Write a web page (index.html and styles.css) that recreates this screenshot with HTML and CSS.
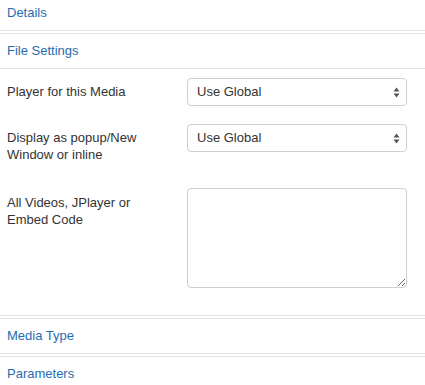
FILE: index.html
```html
<!DOCTYPE html>
<html>
<head>
<meta charset="utf-8">
<link rel="stylesheet" href="styles.css">
</head>
<body>
<div class="accordion">
  <div class="group">
    <a class="toggle" href="#">Details</a>
  </div>
  <div class="group">
    <a class="toggle" href="#">File Settings</a>
    <div class="inner">
      <div class="control-group">
        <label class="control-label">Player for this Media</label>
        <div class="controls">
          <div class="select"><span>Use Global</span>
            <svg class="arrows" width="7" height="11" viewBox="0 0 7 11"><path d="M3.5 0.5 L6.5 4.5 L0.5 4.5 Z M3.5 10.5 L6.5 6.5 L0.5 6.5 Z" fill="#555"/></svg>
          </div>
        </div>
      </div>
      <div class="control-group">
        <label class="control-label">Display as popup/New Window or inline</label>
        <div class="controls">
          <div class="select"><span>Use Global</span>
            <svg class="arrows" width="7" height="11" viewBox="0 0 7 11"><path d="M3.5 0.5 L6.5 4.5 L0.5 4.5 Z M3.5 10.5 L6.5 6.5 L0.5 6.5 Z" fill="#555"/></svg>
          </div>
        </div>
      </div>
      <div class="control-group last">
        <label class="control-label tall">All Videos, JPlayer or Embed Code</label>
        <div class="controls">
          <textarea class="textarea"></textarea>
        </div>
      </div>
    </div>
  </div>
  <div class="group">
    <a class="toggle" href="#">Media Type</a>
  </div>
  <div class="group">
    <a class="toggle" href="#">Parameters</a>
  </div>
</div>
</body>
</html>
```

FILE: styles.css
```css
html, body {
  margin: 0;
  padding: 0;
  background: #fff;
}
body {
  width: 425px;
  height: 385px;
  overflow: hidden;
  font-family: "Helvetica Neue", "Liberation Sans", Arial, sans-serif;
  font-size: 13px;
  line-height: 18px;
  color: #333;
}
.accordion {
  margin-top: -5px;
}
.group {
  border-top: 1px solid #e3e3e3;
  border-bottom: 1px solid #e3e3e3;
  margin-bottom: 2px;
}
.toggle {
  display: block;
  padding: 8px 7px;
  color: #1f6db0;
  text-decoration: none;
}
.inner {
  border-top: 1px solid #e3e3e3;
  padding: 9px 0 9px 7px;
}
.control-group {
  display: flex;
  align-items: flex-start;
  margin-bottom: 18px;
}
.control-group.last {
  margin-top: 25px;
}
.control-label {
  width: 165px;
  margin-right: 15px;
  padding-top: 5px;
  line-height: 17px;
  color: #333;
}
.control-label.tall {
  padding-top: 6px;
}
.controls {
  display: flex;
}
.select {
  box-sizing: border-box;
  width: 220px;
  height: 28px;
  border: 1px solid #cfcfcf;
  border-radius: 4px;
  background: #fff;
  display: flex;
  align-items: center;
  justify-content: space-between;
  padding: 0 6px 0 9px;
  color: #333;
}
.arrows {
  display: block;
}
.textarea {
  box-sizing: border-box;
  display: block;
  width: 220px;
  height: 100px;
  margin: 0;
  border: 1px solid #cfcfcf;
  border-radius: 4px;
  background: #fff;
  font: inherit;
  padding: 4px 6px;
}
```
